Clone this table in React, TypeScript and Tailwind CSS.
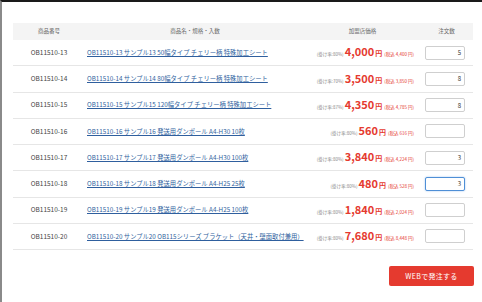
const rows = [
  { code: 'OB11510-13', name: 'OB11510-13 サンプル13 50幅タイプ チェリー柄 特殊加工シート', rate: '80%', price: '4,000', tax: '4,400', qty: '5' },
  { code: 'OB11510-14', name: 'OB11510-14 サンプル14 80幅タイプ チェリー柄 特殊加工シート', rate: '70%', price: '3,500', tax: '3,850', qty: '8' },
  { code: 'OB11510-15', name: 'OB11510-15 サンプル15 120幅タイプ チェリー柄 特殊加工シート', rate: '87%', price: '4,350', tax: '4,785', qty: '8' },
  { code: 'OB11510-16', name: 'OB11510-16 サンプル16 発送用ダンボール A4-H30 10枚', rate: '80%', price: '560', tax: '616', qty: '' },
  { code: 'OB11510-17', name: 'OB11510-17 サンプル17 発送用ダンボール A4-H30 100枚', rate: '80%', price: '3,840', tax: '4,224', qty: '3' },
  { code: 'OB11510-18', name: 'OB11510-18 サンプル18 発送用ダンボール A4-H25 25枚', rate: '80%', price: '480', tax: '528', qty: '3', focus: true },
  { code: 'OB11510-19', name: 'OB11510-19 サンプル19 発送用ダンボール A4-H25 100枚', rate: '80%', price: '1,840', tax: '2,024', qty: '' },
  { code: 'OB11510-20', name: 'OB11510-20 サンプル20 OB115シリーズ ブラケット（天井・壁面取付兼用）', rate: '80%', price: '7,680', tax: '8,448', qty: '' },
];

const grid = 'grid grid-cols-[72px_220px_115px_53px] items-center';

export default function App() {
  return (
    <div
      className="w-[482px] h-[302px] bg-white border-t-2 border-t-[#1a1a1a] border-l-2 border-l-[#8a8a8a] overflow-hidden"
      style={{ fontFamily: '"Noto Sans CJK JP", "Noto Sans", sans-serif' }}
    >
      <div className="pl-[11px] pt-[21px]">
        <div className="w-[460px]">
          <div className={`${grid} h-[17px] bg-[#f4f4f4] text-[5.5px] text-[#666]`}>
            <div className="text-center">商品番号</div>
            <div className="text-center">商品名・規格・入数</div>
            <div className="text-center">加盟店価格</div>
            <div className="text-center">注文数</div>
          </div>
          {rows.map((r) => (
            <div key={r.code} className={`${grid} h-[26.25px] border-b border-[#e6e6e6]`}>
              <div className="text-center text-[6.5px] text-[#444]">{r.code}</div>
              <div className="pl-[2px] text-[6.3px] text-[#2f5f9e] underline whitespace-nowrap">{r.name}</div>
              <div className="flex items-baseline justify-end pr-[6px] whitespace-nowrap text-[#e53a2f]">
                <span className="text-[4.5px] text-[#888] mr-[1px]">(掛け率:{r.rate})</span>
                <span className="text-[11px] font-bold leading-none">{r.price}</span>
                <span className="text-[7px] font-bold ml-[1px] mr-[2px]">円</span>
                <span className="text-[4.5px]">(税込 {r.tax} 円)</span>
              </div>
              <div className="pl-[5px]">
                <div
                  className={`w-[40px] h-[14px] bg-white rounded-[2px] flex items-center justify-end pr-[3px] text-[6px] text-[#333] ${
                    r.focus ? 'border border-[#4f8fd6] shadow-[0_0_2px_#9cc3ee]' : 'border border-[#cfcfcf]'
                  }`}
                >
                  {r.qty}
                </div>
              </div>
            </div>
          ))}
        </div>
        <div className="flex justify-end w-[461px] mt-[16px]">
          <button className="w-[85px] h-[20px] bg-[#e53a2f] rounded-[2px] text-white text-[7px] tracking-[0.3px]">
            WEBで発注する
          </button>
        </div>
      </div>
    </div>
  );
}
